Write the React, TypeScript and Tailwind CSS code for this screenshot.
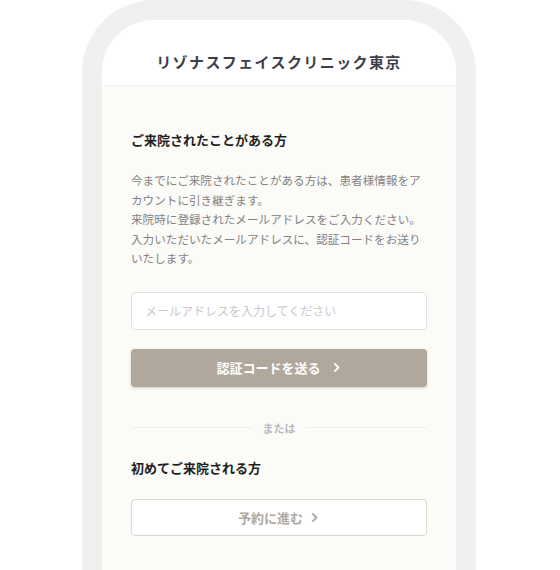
import React from 'react';

const jp = { fontFamily: '"Noto Sans CJK JP", "Noto Sans", sans-serif' };

function Chevron({ className }: { className?: string }) {
  return (
    <svg viewBox="0 0 10 10" className={className} fill="none" stroke="currentColor" strokeWidth="1.6" strokeLinecap="round" strokeLinejoin="round">
      <path d="M3.5 1.8 L6.8 5 L3.5 8.2" />
    </svg>
  );
}

export default function App() {
  return (
    <div className="w-[560px] h-[570px] overflow-hidden bg-white" style={jp}>
      <div className="ml-[82px] w-[394px] h-[600px] bg-[#f0f0f0] rounded-t-[72px] pt-[20px] px-[20px]">
        <div className="h-full bg-[#fbfbf8] rounded-t-[52px] overflow-hidden">
          <header className="h-[65px] bg-white flex items-end justify-center pb-[12px] shadow-[0_1px_2px_rgba(0,0,0,0.03)]">
            <h1 className="text-[15px] font-bold tracking-[1.4px] text-[#3e3d4c]">リゾナスフェイスクリニック東京</h1>
          </header>

          <main className="px-[29px] pt-[45px]">
            <h2 className="text-[13px] font-bold text-[#1f1f1f] leading-[20px]">ご来院されたことがある方</h2>
            <p className="mt-[21px] text-[11.6px] leading-[19.5px] text-[#858181]">
              今までにご来院されたことがある方は、患者様情報をアカウントに引き継ぎます。
              <br />
              来院時に登録されたメールアドレスをご入力ください。入力いただいたメールアドレスに、認証コードをお送りいたします。
            </p>

            <div className="mt-[23px] h-[38px] bg-white border border-[#e2e2e4] rounded-[4px] flex items-center px-[13px]">
              <span className="text-[12px] text-[#c9c8d0]">メールアドレスを入力してください</span>
            </div>

            <button className="mt-[19px] w-full h-[38px] bg-[#b0a89c] rounded-[4px] shadow-[0_1px_3px_rgba(0,0,0,0.18)] flex items-center justify-center gap-[10px] text-white text-[13px] font-bold">
              <span>認証コードを送る</span>
              <Chevron className="w-[11px] h-[11px]" />
            </button>

            <div className="mt-[33px] flex items-center gap-[10px]">
              <div className="flex-1 h-px bg-[#efefef]" />
              <span className="text-[11px] font-bold text-[#b9b8c0]">または</span>
              <div className="flex-1 h-px bg-[#efefef]" />
            </div>

            <h2 className="mt-[22px] text-[13px] font-bold text-[#1f1f1f] leading-[20px]">初めてご来院される方</h2>

            <button className="mt-[21px] w-full h-[37px] bg-white border border-[#ddd7d0] rounded-[4px] flex items-center justify-center gap-[6px] text-[#b0a89c] text-[13px] font-bold">
              <span>予約に進む</span>
              <Chevron className="w-[11px] h-[11px]" />
            </button>
          </main>
        </div>
      </div>
    </div>
  );
}
